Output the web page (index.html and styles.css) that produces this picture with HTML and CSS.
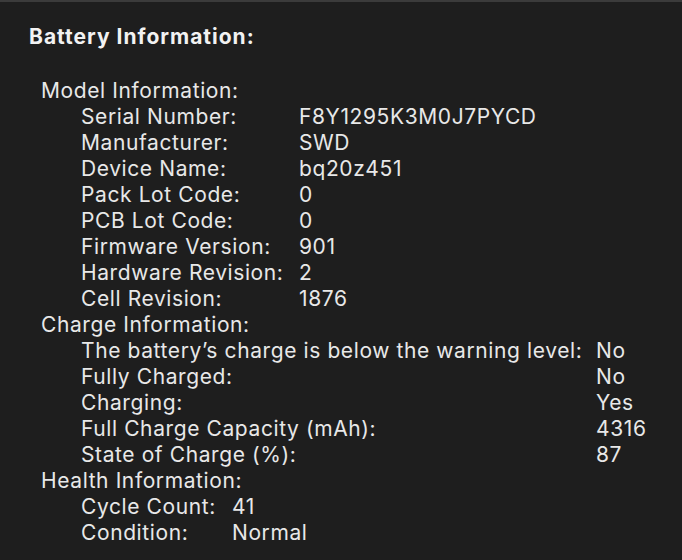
FILE: index.html
```html
<!DOCTYPE html>
<html lang="en">
<head>
  <meta charset="UTF-8" />
  <title>Battery Information</title>
  <link rel="stylesheet" href="styles.css">
</head>
<body>
  <div class="panel">
    <h1>Battery Information:</h1>

    <div class="group">
      <div class="group-title">Model Information:</div>
      <div class="rows rows-model">
        <span>Serial Number:</span><span>F8Y1295K3M0J7PYCD</span>
        <span>Manufacturer:</span><span>SWD</span>
        <span>Device Name:</span><span>bq20z451</span>
        <span>Pack Lot Code:</span><span>0</span>
        <span>PCB Lot Code:</span><span>0</span>
        <span>Firmware Version:</span><span>901</span>
        <span>Hardware Revision:</span><span>2</span>
        <span>Cell Revision:</span><span>1876</span>
      </div>
    </div>

    <div class="group">
      <div class="group-title">Charge Information:</div>
      <div class="rows rows-charge">
        <span>The battery’s charge is below the warning level:</span><span>No</span>
        <span>Fully Charged:</span><span>No</span>
        <span>Charging:</span><span>Yes</span>
        <span>Full Charge Capacity (mAh):</span><span>4316</span>
        <span>State of Charge (%):</span><span>87</span>
      </div>
    </div>

    <div class="group">
      <div class="group-title">Health Information:</div>
      <div class="rows rows-health">
        <span>Cycle Count:</span><span>41</span>
        <span>Condition:</span><span>Normal</span>
      </div>
    </div>
  </div>
</body>
</html>
```

FILE: styles.css
```css
body {
  margin: 0;
  height: 560px;
  background-color: #1e1e1e;
  border-top: 2px solid #3b3b3b;
  box-sizing: border-box;
  font-family: Inter, 'Liberation Sans', sans-serif;
  color: #e8e8e8;
  overflow: hidden;
}
.panel {
  padding: 22px 0 0 29px;
}
h1 {
  margin: 0 0 28px;
  font-size: 21px;
  font-weight: 700;
  line-height: 26px;
  letter-spacing: 1px;
  color: #f2f2f2;
}
.group {
  padding-left: 12px;
  font-size: 21px;
  line-height: 26px;
  letter-spacing: 0.6px;
}
.rows {
  display: grid;
  padding-left: 40px;
}
.rows-model {
  grid-template-columns: 218px auto;
}
.rows-charge {
  grid-template-columns: 515px auto;
}
.rows-health {
  grid-template-columns: 151px auto;
}
```
